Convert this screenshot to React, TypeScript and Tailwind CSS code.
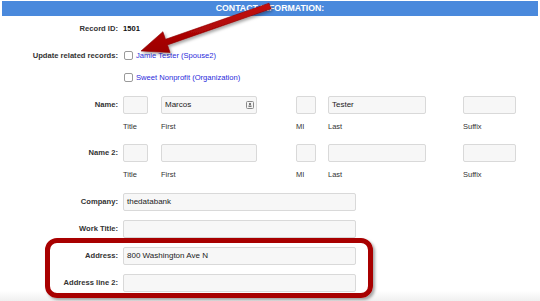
import React from "react";

const Field = ({ w, value, icon }: { w: string; value?: string; icon?: boolean }) => (
  <div
    className={`${w} relative h-[18px] rounded-[2px] border border-[#d9d9d9] bg-[#f7f7f7] pl-[3px] text-[8px] leading-[16px] text-[#222222]`}
  >
    {value}
    {icon && (
      <svg className="absolute right-[2px] top-[4px]" width="8" height="8" viewBox="0 0 8 8">
        <rect x="0.5" y="0.5" width="7" height="7" rx="1" fill="#f3f3f3" stroke="#8a8a8a" />
        <rect x="3" y="2" width="2" height="2" fill="#777" />
        <rect x="2.5" y="4.5" width="3" height="1.5" fill="#777" />
      </svg>
    )}
  </div>
);

const Label = ({ children }: { children: React.ReactNode }) => (
  <div className="w-[119px] shrink-0 pr-[1px] text-right text-[7.6px] font-bold text-[#333333]">{children}</div>
);

const NameRow = ({ label, first }: { label: string; first?: string }) => (
  <>
    <div className="mt-[12px] flex h-[18px] items-center">
      <Label>{label}</Label>
      <div className="ml-[4px] grid grid-cols-[38px_135px_32px_135px_53px]">
        <Field w="w-[25px]" />
        <Field w="w-[96px]" value={first} icon={!!first} />
        <Field w="w-[20px]" />
        <Field w="w-[98px]" value={first ? "Tester" : undefined} />
        <Field w="w-[53px]" />
      </div>
    </div>
    <div className="mt-[7px] flex h-[12px] items-center text-[7.5px] text-[#333333]">
      <div className="w-[123px] shrink-0" />
      <div className="grid grid-cols-[38px_135px_32px_135px_53px] text-[#333333]">
        <div>Title</div>
        <div>First</div>
        <div>MI</div>
        <div>Last</div>
        <div>Suffix</div>
      </div>
    </div>
  </>
);

const WideRow = ({ label, value, mt }: { label: string; value?: string; mt: string }) => (
  <div className={`${mt} flex h-[18px] items-center`}>
    <Label>{label}</Label>
    <div className="ml-[4px]">
      <Field w="w-[233px]" value={value} />
    </div>
  </div>
);

const Checkbox = () => (
  <div className="h-[9px] w-[9px] shrink-0 rounded-[2px] border border-[#9a9a9a] bg-white" />
);

export default function App() {
  return (
    <div
      className="relative h-[301px] w-[540px] overflow-hidden bg-white"
      style={{ fontFamily: '"Liberation Sans", Arial, sans-serif' }}
    >
      <div className="mx-[2px] mt-[1px] flex h-[15px] items-center justify-center bg-[#4a89dc] text-[8.75px] font-bold text-white">
        CONTACT INFORMATION:
      </div>

      <div className="mt-[7px] flex h-[12px] items-center">
        <Label>Record ID:</Label>
        <div className="ml-[4px] text-[7.6px] font-bold text-[#111111]">1501</div>
      </div>

      <div className="mt-[15px] flex h-[12px] items-center">
        <Label>Update related records:</Label>
        <div className="ml-[5px] flex items-center gap-[3px] text-[7.6px] text-[#2b2bdb]">
          <Checkbox />
          <span>Jamie Tester (Spouse2)</span>
        </div>
      </div>

      <div className="mt-[10px] flex h-[12px] items-center">
        <div className="w-[124px] shrink-0" />
        <div className="flex items-center gap-[3px] text-[7.6px] text-[#2b2bdb]">
          <Checkbox />
          <span>Sweet Nonprofit (Organization)</span>
        </div>
      </div>

      <NameRow label="Name:" first="Marcos" />
      <div className="-mt-[1px]" />
      <NameRow label="Name 2:" />

      <WideRow label="Company:" value="thedatabank" mt="mt-[12px]" />
      <WideRow label="Work Title:" mt="mt-[9px]" />
      <WideRow label="Address:" value="800 Washington Ave N" mt="mt-[9px]" />
      <WideRow label="Address line 2:" mt="mt-[9px]" />

      <div className="pointer-events-none absolute bottom-0 left-0 h-[10px] w-full bg-gradient-to-b from-transparent to-[#f0f0f0]" />

      <div className="pointer-events-none absolute left-[45px] top-[238px] h-[60px] w-[328px] rounded-[12px] border-[5.5px] border-[#a80000] shadow-[2px_2px_3px_rgba(0,0,0,0.35)]" />

      <svg className="pointer-events-none absolute left-0 top-0" width="540" height="301" viewBox="0 0 540 301">
        <defs>
          <linearGradient id="ag" x1="0" y1="0" x2="0" y2="1">
            <stop offset="0" stopColor="#c41010" />
            <stop offset="1" stopColor="#9c0000" />
          </linearGradient>
          <filter id="sh" x="-20%" y="-20%" width="140%" height="160%">
            <feDropShadow dx="1.5" dy="2" stdDeviation="1.5" floodColor="#000" floodOpacity="0.35" />
          </filter>
        </defs>
        <polygon
          points="141,51 162.9,31.7 165.5,39.3 269,3.2 271,8.8 167.5,44.9 170.1,52.5"
          fill="url(#ag)"
          stroke="#8e0000"
          strokeWidth="0.6"
          strokeLinejoin="round"
          filter="url(#sh)"
        />
      </svg>
    </div>
  );
}
